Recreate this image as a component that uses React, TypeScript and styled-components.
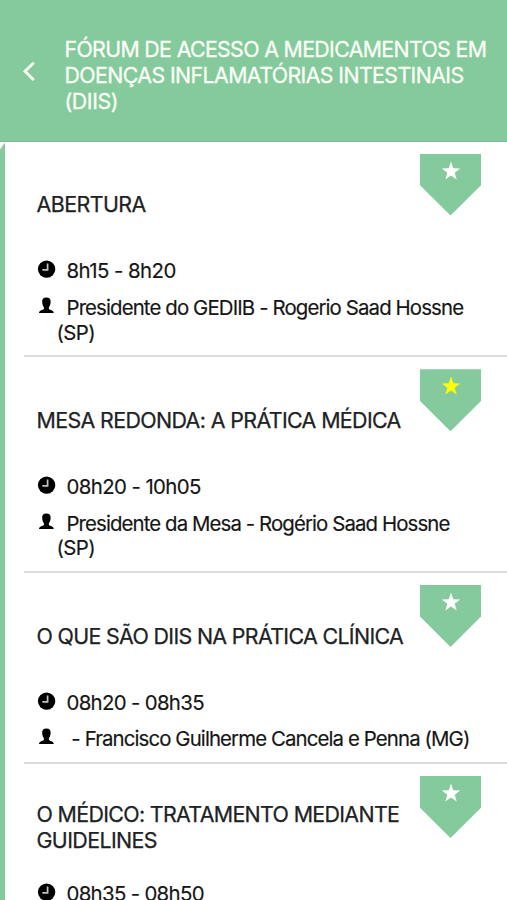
import React from 'react';
import styled, { createGlobalStyle } from 'styled-components';

const GREEN = '#84ca9c';

const GlobalStyle = createGlobalStyle`
  html, body { margin: 0; background: #fff; overflow: hidden; }
  * { box-sizing: border-box; }
`;

const Screen = styled.div`
  display: flex;
  flex-direction: column;
  height: 900px;
  overflow: hidden;
  font-family: Inter, 'Liberation Sans', sans-serif;
`;

const Header = styled.header`
  display: flex;
  flex: none;
  height: 141.6px;
  padding: 37px 0 0 22px;
  background: ${GREEN};
  border-bottom: 1px solid #7fb892;
  color: #fbfff6;
`;

const BackButton = styled.button`
  flex: none;
  width: 42.5px;
  height: 68px;
  padding: 0;
  border: 0;
  background: none;
  color: inherit;
  text-align: left;
  svg { display: block; }
`;

const HeaderTitle = styled.h1`
  margin: 0;
  font-size: 21.3px;
  line-height: 25.9px;
  font-weight: 400;
  -webkit-text-stroke: 0.3px currentColor;
`;

const Line = styled.span<{ $spacing: number }>`
  display: block;
  white-space: pre;
  letter-spacing: ${(p) => p.$spacing}px;
`;

const Agenda = styled.main`
  display: flex;
  flex: 1;
  min-height: 0;
`;

const Rail = styled.div`
  flex: none;
  width: 5px;
  margin-top: 1px;
  background: ${GREEN};
  clip-path: polygon(0 7px, 100% 0, 100% 100%, 0 100%);
`;

const List = styled.div`
  flex: 1;
  padding-left: 19px;
`;

const Session = styled.article`
  display: grid;
  grid-template-columns: 1fr 61px;
  grid-template-rows: 103px auto;
  padding: 12px 26px 10.2px 12.5px;
  border-bottom: 2px solid #dcdcdc;
`;

const Title = styled.h2`
  align-self: center;
  margin: 0;
  color: #202224;
  font-size: 21.4px;
  line-height: 25.7px;
  font-weight: 400;
  -webkit-text-stroke: 0.25px currentColor;
`;

const Badge = styled.div`
  display: flex;
  justify-content: center;
  width: 61px;
  height: 62px;
  padding-top: 7px;
  background: ${GREEN};
  clip-path: polygon(0 0, 100% 0, 100% 51%, 50% 100%, 0 51%);
`;

const Details = styled.div`
  grid-column: 1 / -1;
  padding-top: 2.6px;
  color: #151515;
  font-size: 20.4px;
  line-height: 24.5px;
  -webkit-text-stroke: 0.15px currentColor;
`;

const Detail = styled.div<{ $gap?: number }>`
  display: grid;
  grid-template-columns: 20px 1fr;
  column-gap: 10px;
  margin-top: ${(p) => p.$gap ?? 0}px;
  svg { margin-top: 1px; }
`;

const Continuation = styled(Line)`
  margin-left: -10px;
`;

interface TextLine {
  text: string;
  spacing: number;
}

interface SessionData {
  title: TextLine[];
  time: TextLine;
  speaker: TextLine[];
  starred?: boolean;
}

const heading: TextLine[] = [
  { text: 'FÓRUM DE ACESSO A MEDICAMENTOS EM', spacing: -0.63 },
  { text: 'DOENÇAS INFLAMATÓRIAS INTESTINAIS', spacing: -0.57 },
  { text: '(DIIS)', spacing: -0.4 },
];

const sessions: SessionData[] = [
  {
    title: [{ text: 'ABERTURA', spacing: -0.55 }],
    time: { text: '8h15 - 8h20', spacing: -0.55 },
    speaker: [
      { text: 'Presidente do GEDIIB - Rogerio Saad Hossne', spacing: -0.88 },
      { text: '(SP)', spacing: -0.6 },
    ],
  },
  {
    title: [{ text: 'MESA REDONDA: A PRÁTICA MÉDICA', spacing: -0.62 }],
    time: { text: '08h20 - 10h05', spacing: -0.6 },
    speaker: [
      { text: 'Presidente da Mesa - Rogério Saad Hossne', spacing: -0.9 },
      { text: '(SP)', spacing: -0.6 },
    ],
    starred: true,
  },
  {
    title: [{ text: 'O QUE SÃO DIIS NA PRÁTICA CLÍNICA', spacing: -0.66 }],
    time: { text: '08h20 - 08h35', spacing: -0.68 },
    speaker: [{ text: ' - Francisco Guilherme Cancela e Penna (MG)', spacing: -0.89 }],
  },
  {
    title: [
      { text: 'O MÉDICO: TRATAMENTO MEDIANTE', spacing: -0.66 },
      { text: 'GUIDELINES', spacing: -0.6 },
    ],
    time: { text: '08h35 - 08h50', spacing: -0.68 },
    speaker: [],
  },
];

const Chevron = () => (
  <svg width="14" height="68" viewBox="0 0 14 68" fill="none">
    <path d="M11.8 25.8 3 34.3l8.8 8.6" stroke="currentColor" strokeWidth="2.8" />
  </svg>
);

const Star = ({ color }: { color: string }) => (
  <svg width="20" height="20" viewBox="0 0 20 20">
    <path
      d="M10 .6 12.3 7.2 19.2 7.4 13.7 11.7 15.7 18.4 10 14.4 4.3 18.4 6.3 11.7 .8 7.4 7.7 7.2Z"
      fill={color}
    />
  </svg>
);

const Clock = () => (
  <svg width="19" height="19" viewBox="0 0 19 19">
    <circle cx="9.6" cy="9.1" r="8.7" fill="#000" />
    <path d="M10.6 3.6v6.2H5.4" fill="none" stroke="#c4c4c4" strokeWidth="1.7" />
  </svg>
);

const Person = () => (
  <svg width="19" height="19" viewBox="0 0 19 19">
    <path
      d="M9.4 .6c3.200 0 4.500 1.700 4.200 4.600-.2 2.300-.6 3.700-1.700 4.800v2c.9 1 4.700 1 4.900 4H2c.2-3 4-3 4.900-4v-2C5.800 8.900 5.400 7.500 5.200 5.200 4.900 2.300 6.200 .6 9.400 .6Z"
      fill="#000"
    />
  </svg>
);

export default function App() {
  return (
    <>
      <GlobalStyle />
      <Screen>
        <Header>
          <BackButton aria-label="Voltar">
            <Chevron />
          </BackButton>
          <HeaderTitle>
            {heading.map((l) => (
              <Line key={l.text} $spacing={l.spacing}>{l.text}</Line>
            ))}
          </HeaderTitle>
        </Header>
        <Agenda>
          <Rail />
          <List>
            {sessions.map((s) => (
              <Session key={s.title[0].text}>
                <Title>
                  {s.title.map((l) => (
                    <Line key={l.text} $spacing={l.spacing}>{l.text}</Line>
                  ))}
                </Title>
                <Badge>
                  <Star color={s.starred ? '#ffff08' : '#ffffff'} />
                </Badge>
                <Details>
                  <Detail>
                    <Clock />
                    <Line $spacing={s.time.spacing}>{s.time.text}</Line>
                  </Detail>
                  {s.speaker.length > 0 && (
                    <Detail $gap={12.4}>
                      <Person />
                      <div>
                        <Line $spacing={s.speaker[0].spacing}>{s.speaker[0].text}</Line>
                        {s.speaker.slice(1).map((l) => (
                          <Continuation key={l.text} $spacing={l.spacing}>{l.text}</Continuation>
                        ))}
                      </div>
                    </Detail>
                  )}
                </Details>
              </Session>
            ))}
          </List>
        </Agenda>
      </Screen>
    </>
  );
}
